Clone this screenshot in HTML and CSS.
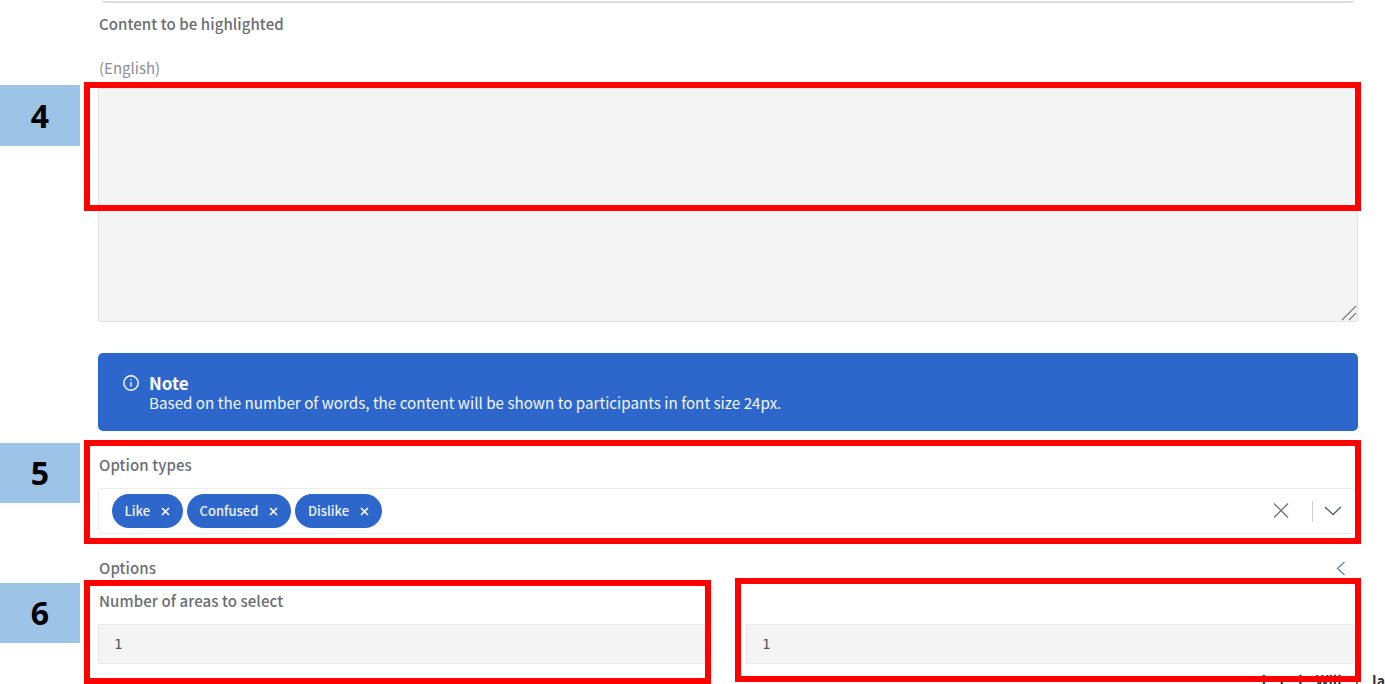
FILE: index.html
```html
<!DOCTYPE html>
<html lang="en">
<head>
<meta charset="utf-8">
<title>Highlight question</title>
<link rel="stylesheet" href="styles.css">
</head>
<body>
<main class="form">
  <div class="prev-field"></div>
  <div class="label label-content">Content to be highlighted</div>
  <div class="lang">(English)</div>
  <div class="area-wrap">
    <textarea class="area" readonly></textarea>
    <svg class="grip" width="16" height="16" viewBox="0 0 16 16" fill="none" stroke="#777" stroke-width="1.1"><path d="M1 15L15 1M8 15l7-7"/></svg>
  </div>
  <section class="note">
    <svg class="note-icon" width="18" height="18" viewBox="0 0 18 18" fill="none" stroke="#fff" stroke-width="1.4"><circle cx="9" cy="9" r="7.2"/><path d="M9 8.2v4.2M9 5.2v1.4"/></svg>
    <div class="note-text">
      <strong class="note-title">Note</strong>
      <div>Based on the number of words, the content will be shown to participants in font size 24px.</div>
    </div>
  </section>
  <div class="label label-types">Option types</div>
  <div class="select">
    <div class="chips">
      <span class="chip">Like<svg width="9" height="9" viewBox="0 0 9 9" stroke="#fff" stroke-width="1.6"><path d="M1 1l7 7M8 1l-7 7"/></svg></span>
      <span class="chip">Confused<svg width="9" height="9" viewBox="0 0 9 9" stroke="#fff" stroke-width="1.6"><path d="M1 1l7 7M8 1l-7 7"/></svg></span>
      <span class="chip">Dislike<svg width="9" height="9" viewBox="0 0 9 9" stroke="#fff" stroke-width="1.6"><path d="M1 1l7 7M8 1l-7 7"/></svg></span>
    </div>
    <svg class="clear" width="16" height="15" viewBox="0 0 16 15" fill="none" stroke="#6f7378" stroke-width="1.3"><path d="M1 .5l14 14M15 .5l-14 14"/></svg>
    <span class="sep"></span>
    <svg class="caret" width="18" height="10" viewBox="0 0 18 10" fill="none" stroke="#5b6066" stroke-width="1.4"><path d="M1 1l8 7.5L17 1"/></svg>
  </div>
  <div class="options-row">
    <span class="label">Options</span>
    <svg class="collapse" width="10" height="15" viewBox="0 0 10 15" fill="none" stroke="#6f86b0" stroke-width="1.4"><path d="M8.5 1L1.5 7.5l7 6.5"/></svg>
  </div>
  <div class="label label-number">Number of areas to select</div>
  <div class="inputs">
    <div class="num">1</div>
    <div class="num">1</div>
  </div>
  <div class="footer-line">i t i Will | Ia</div>
</main>

<div class="tag tag-4">4</div>
<div class="tag tag-5">5</div>
<div class="tag tag-6">6</div>
<div class="mark mark-4"></div>
<div class="mark mark-5"></div>
<div class="mark mark-6a"></div>
<div class="mark mark-6b"></div>
</body>
</html>
```
FILE: styles.css
```css
html, body { margin: 0; height: 684px; overflow: hidden; background: #fff; }
body { position: relative; font-family: "Noto Sans CJK KR", "Noto Sans", sans-serif; color: #6a6e73; }
.form { width: 1260px; margin-left: 98px; }
.prev-field { height: 3px; margin-left: 4px; margin-right: 4px; box-sizing: border-box; border-bottom: 2px solid #dcdcdc; border-radius: 0 0 6px 6px; }
.label { padding-left: 1px; font-size: 15px; font-weight: 500; line-height: 20px; letter-spacing: .08px; color: #6a6e73; }
.label-content { margin-top: 11px; }
.lang { margin-top: 24px; padding-left: 1px; font-size: 15px; line-height: 20px; color: #8b8f94; }
.area-wrap { position: relative; margin-top: 10px; }
.area { display: block; box-sizing: border-box; width: 100%; height: 234px; margin: 0; padding: 8px; background: #f4f4f4; border: 1px solid #e4e4e4; border-radius: 2px; outline: none; resize: none; }
.grip { position: absolute; right: 1px; bottom: 1px; }
.note { display: flex; align-items: flex-start; gap: 9px; box-sizing: border-box; height: 78px; margin-top: 31px; padding: 19px 0 0 24px; background: #2e67cc; border-radius: 5px; color: #f4f7fc; font-size: 15.2px; line-height: 20px; }
.note-icon { flex: none; margin-top: 2px; }
.note-title { display: block; margin-top: 1px; font-size: 17px; line-height: 19px; font-weight: 700; color: #fff; }
.label-types { margin-top: 24px; }
.select { display: flex; align-items: center; box-sizing: border-box; height: 46px; margin-top: 13px; padding: 0 15px 0 13px; border: 1px solid #ececec; border-radius: 3px; }
.chips { display: flex; flex: 1; gap: 4px; }
.chip { display: flex; align-items: center; box-sizing: border-box; height: 34px; padding: 0 13px 2px 12.5px; background: #2e67cc; border-radius: 17px; color: #eef3fb; font-size: 13px; font-weight: 500; gap: 11px; }
.chip svg { margin-top: 2px; }
.clear { margin-right: 23px; margin-bottom: 2px; }
.sep { width: 1px; height: 21px; background: #cfcfcf; margin-right: 11px; }
.options-row { display: flex; justify-content: space-between; align-items: flex-start; margin-top: 24px; padding-right: 12px; }
.collapse { margin-top: 2.5px; }
.label-number { margin-top: 13px; }
.inputs { display: grid; grid-template-columns: 608px 612px; column-gap: 40px; margin-top: 13px; }
.num { box-sizing: border-box; height: 40px; padding-left: 15px; background: #f4f4f4; border: 1px solid #e8e8e8; font-size: 14px; line-height: 38px; color: #55585c; font-family: "DejaVu Sans Mono", monospace; }
.footer-line { margin: 6px -27px 0 0; font-size: 14px; font-weight: 700; line-height: 20px; color: #333; text-align: right; white-space: pre; word-spacing: 10px; }
.tag { position: absolute; left: 0; width: 80px; height: 60px; background: #9dc3e6; color: #000; font-family: "Open Sans", "Liberation Sans", sans-serif; font-weight: 700; font-size: 32px; line-height: 60px; text-align: center; }
.tag-4 { top: 85px; height: 61px; line-height: 61px; }
.tag-5 { top: 443px; }
.tag-6 { top: 583px; }
.mark { position: absolute; box-sizing: border-box; border: 6px solid #ff0000; }
.mark-4 { left: 84px; top: 82px; width: 1277px; height: 129px; }
.mark-5 { left: 84px; top: 440px; width: 1277px; height: 104px; }
.mark-6a { left: 84px; top: 580px; width: 627px; height: 104px; }
.mark-6b { left: 735px; top: 578px; width: 626px; height: 104px; }
```
